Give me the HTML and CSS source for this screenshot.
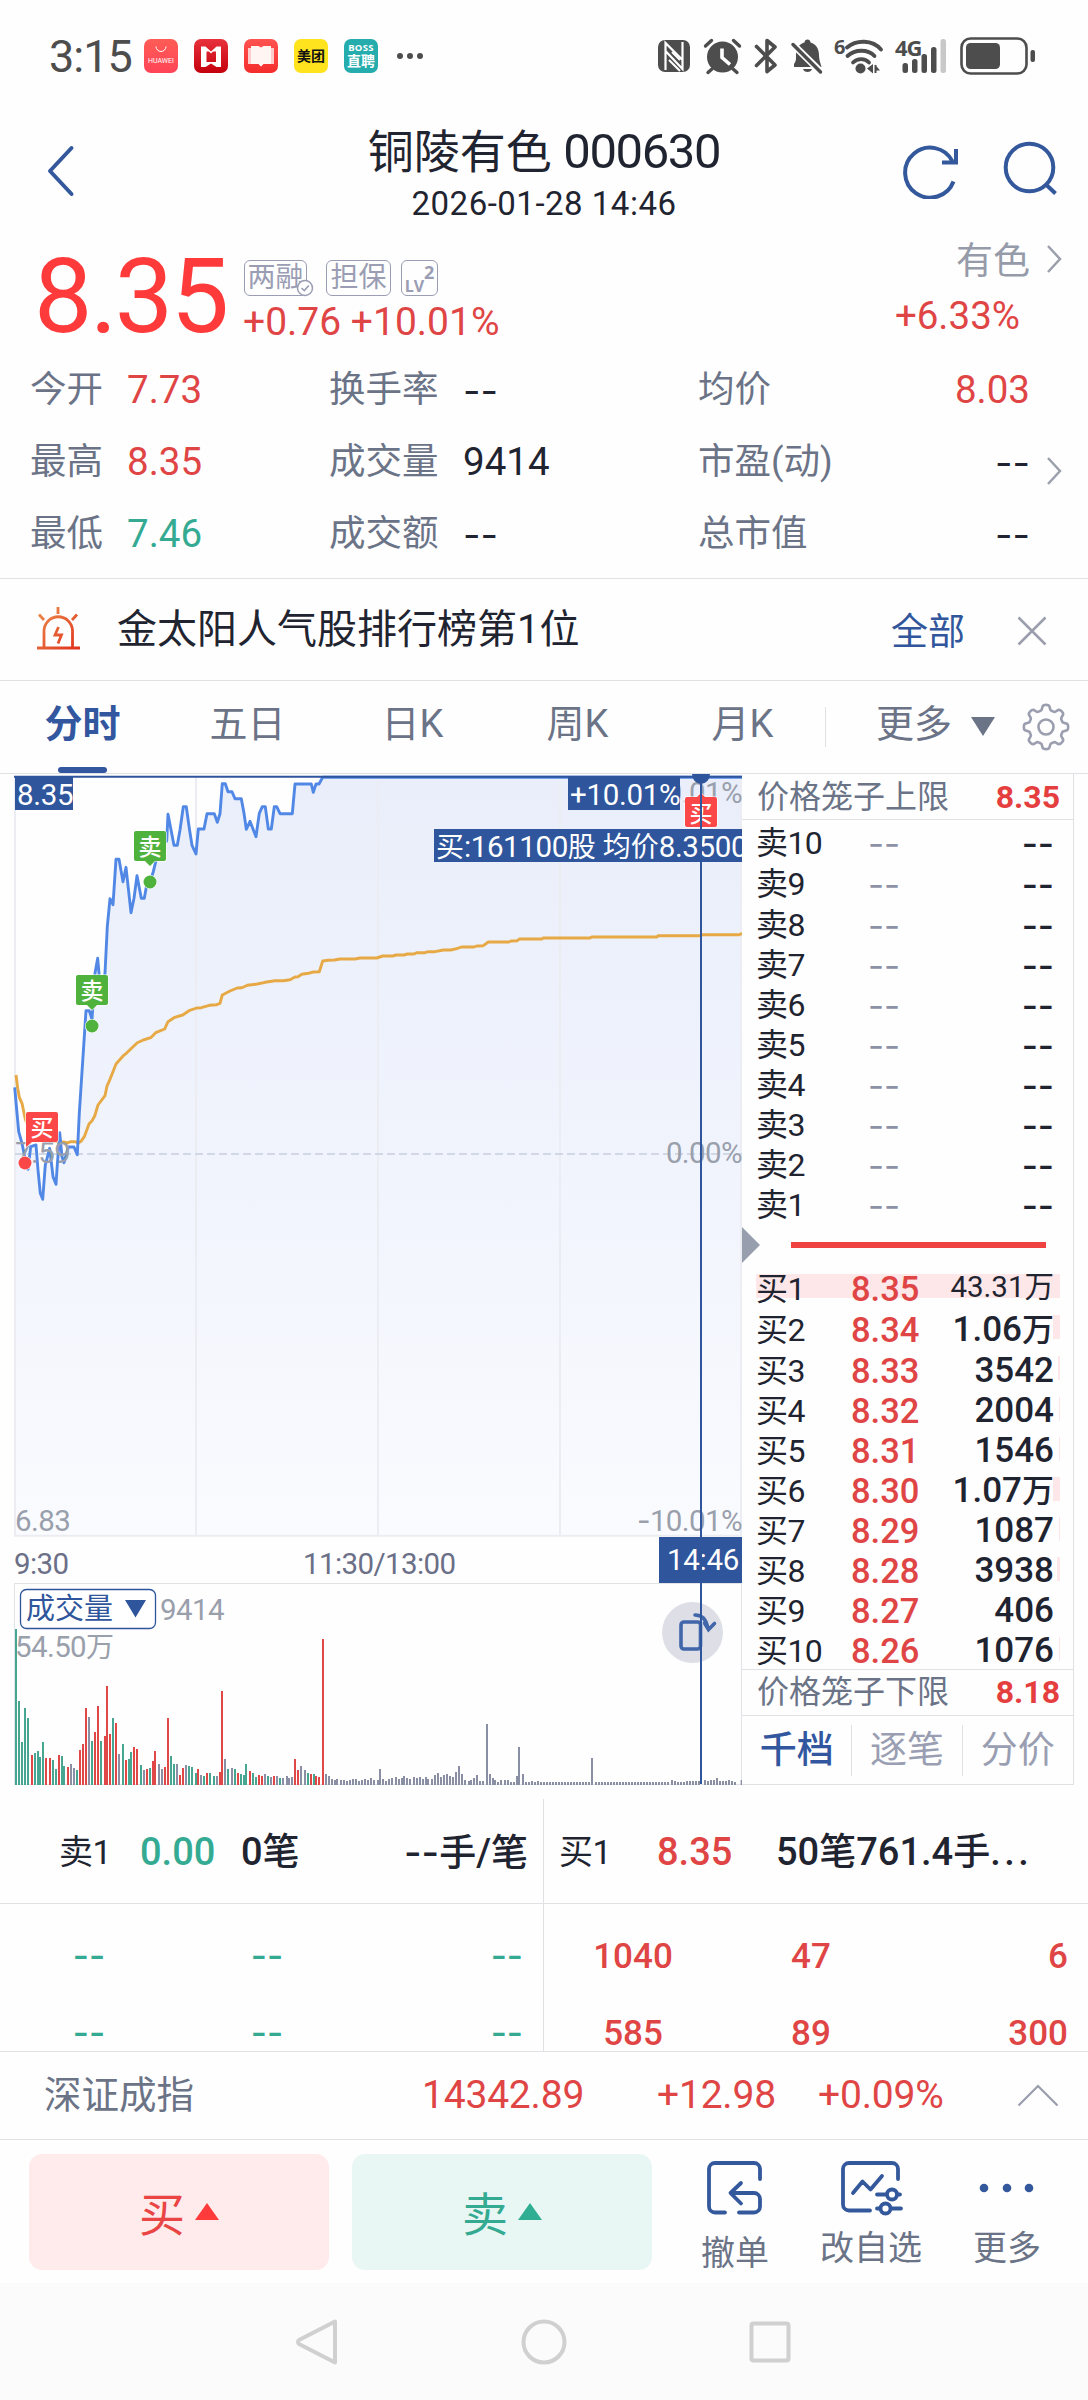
FILE: index.html
```html
<!DOCTYPE html>
<html lang="zh-CN">
<head>
<meta charset="utf-8">
<title>铜陵有色 000630</title>
<link rel="stylesheet" href="styles.css">
</head>
<body>
<div class="status">
  <span class="clock">3:15</span>
  <span class="app app-huawei"><svg width="12" height="7" viewBox="0 0 12 7"><path d="M1 0.5a5 5 0 0 0 10 0" fill="none" stroke="#fff" stroke-width="1"/></svg><b>HUAWEI</b></span>
  <span class="app app-book"><svg width="34" height="34" viewBox="0 0 34 34"><path d="M7 7.500h4.500l5.500 5 5.500-5H27V28h-4.500L17 24.500 11.500 28H7zM12.500 12.500v10.500h9.500v-10.500h-3l-2 2-2-2z" fill="#fff" fill-rule="evenodd"/></svg></span>
  <span class="app app-read"><svg width="34" height="34" viewBox="0 0 34 34"><path d="M4 9h26v16H19l-2 2-2-2H4z" fill="#fcc"/><path d="M7 7h7.500l2.500 1.500L19.500 7H27v18h-7.500L17 27.500 14.500 25H7z" fill="#fff5f3"/></svg></span>
  <span class="app app-meituan">美团</span>
  <span class="app app-boss"><b>BOSS</b><i>直聘</i></span>
  <svg class="more-dots" width="28" height="8" viewBox="0 0 28 8" fill="#4d4d4d"><circle cx="4" cy="4" r="3"/><circle cx="14" cy="4" r="3"/><circle cx="24" cy="4" r="3"/></svg>
  <svg class="sys" width="382" height="42" viewBox="655 35 382 42" fill="#4d4d4d">
    <rect x="657" y="40" width="32" height="32" rx="7"/>
    <path d="M664.500 70V43l17.500 17.500M681.500 42v27L664.500 51" fill="none" stroke="#fff" stroke-width="2.200"/><path d="M668 60l11 11M671 52l8 8" stroke="#fff" stroke-width="2" fill="none"/>
    <circle cx="721.500" cy="57" r="15.500"/><path d="M704.500 46l6-5.500M738.500 46l-6-5.500M711 69l-4 3.500M732 69l4 3.500" stroke="#4d4d4d" stroke-width="3.400" stroke-linecap="round"/><path d="M721 48.500v9l8 7" stroke="#fff" stroke-width="3.600" fill="none"/>
    <path d="M755.500 46.500L774 65l-8 6.500v-31l8 6.500-18.500 18.500" fill="none" stroke="#4d4d4d" stroke-width="3.600" stroke-linejoin="round" stroke-linecap="round"/>
    <path d="M793 67v-3c2.500-3 2-6 2-9 0-7 4-11.500 8.500-12.500 0-4 6-4 6 0C815 44 818 49 818 55c0 4 1 7 2.500 12z"/><path d="M802 69h9c-1 4-8 4-9 0z"/><path d="M791.500 44l29 28.500" stroke="#fff" stroke-width="7"/><path d="M792 44.500l27.500 27.500" stroke="#4d4d4d" stroke-width="3.500" stroke-linecap="round"/>
    <text x="833" y="54" class="sys-text sys-six">6</text>
    <g fill="none" stroke="#4d4d4d" stroke-width="3.800" stroke-linecap="round"><path d="M846 47.500c9.500-8 25.500-8 34 2"/><path d="M846.500 56c7.500-7 20.500-7 27 0"/><path d="M852 62.500c4.500-4.500 12-4.500 16 0"/></g>
    <circle cx="859.500" cy="68.500" r="5"/><path d="M866 68.500l6-4.500v9.500zM879 70.500h-5v-6zM873.500 65h2v8h-2z"/>
    <text x="894" y="56" class="sys-text">4G</text>
    <rect x="901.500" y="63" width="5.500" height="10" rx="2.500"/><rect x="911" y="59" width="5.500" height="14" rx="2.500"/><rect x="920.500" y="54" width="5.500" height="19" rx="2.500"/><rect x="930" y="47" width="5.500" height="26" rx="2.500"/><rect x="939.500" y="39" width="5.500" height="34" rx="2.500" fill="#c8c8c8"/>
    <rect x="960.500" y="38.500" width="65" height="35" rx="9" fill="none" stroke="#4d4d4d" stroke-width="2.600"/><rect x="965" y="43" width="34" height="26" rx="4.500"/><rect x="1029.500" y="50" width="4.500" height="12" rx="2"/>
  </svg>
</div>

<header class="header">
  <svg class="back" width="30" height="54" viewBox="0 0 30 54"><path d="M25.500 4L4 27l21.500 23" fill="none" stroke="#34589c" stroke-width="4" stroke-linecap="round" stroke-linejoin="round"/></svg>
  <div class="title"><h1>铜陵有色 <span>000630</span></h1><time>2026-01-28 14:46</time></div>
  <svg class="refresh" width="56" height="56" viewBox="0 0 56 56" fill="none" stroke="#34589c" stroke-width="4"><path d="M50.500 38.500A25 25 0 1 1 49.500 18.500"/><path d="M53 6v13.500H39"/></svg>
  <svg class="search" width="56" height="56" viewBox="0 0 56 56" fill="none" stroke="#34589c" stroke-width="4"><circle cx="27.500" cy="26.500" r="23.800"/><path d="M44.500 44l9 8.500"/></svg>
</header>

<section class="quote">
  <div class="quote-top">
    <strong class="price">8.35</strong>
    <div class="change">
      <div class="badges"><span class="badge badge-margin">两融<svg width="18" height="18" viewBox="0 0 18 18"><circle cx="9" cy="9" r="7.500" fill="#fff" stroke="#9a9db3" stroke-width="1.500"/><path d="M5.500 9l2.800 2.500 4.500-5" fill="none" stroke="#9a9db3" stroke-width="1.600"/></svg></span><span class="badge badge-guar">担保</span><span class="badge badge-lv">LV<sup>2</sup></span></div>
      <div class="red diff">+0.76 +10.01%</div>
    </div>
    <div class="sector"><span>有色</span><em class="red">+6.33%</em></div>
    <svg class="chev" width="16" height="30" viewBox="0 0 16 30"><path d="M2 2l12 13L2 28" fill="none" stroke="#9ca0ac" stroke-width="2.500"/></svg>
  </div>
  <div class="qrow"><span>今开</span><b class="red">7.73</b><span>换手率</span><b class="dash">--</b><span>均价</span><b class="red end">8.03</b></div>
  <div class="qrow"><span>最高</span><b class="red">8.35</b><span>成交量</span><b>9414</b><span>市盈(动)</span><b class="dash end">--</b><svg class="chev" width="16" height="30" viewBox="0 0 16 30"><path d="M2 2l12 13L2 28" fill="none" stroke="#9ca0ac" stroke-width="2.500"/></svg></div>
  <div class="qrow"><span>最低</span><b class="green">7.46</b><span>成交额</span><b class="dash">--</b><span>总市值</span><b class="dash end">--</b></div>
</section>

<section class="news">
  <svg width="46" height="46" viewBox="0 0 46 46" fill="none" stroke="url(#alarm)" stroke-width="2.800"><defs><linearGradient id="alarm" gradientUnits="userSpaceOnUse" x1="4" y1="4" x2="44" y2="44"><stop offset="0" stop-color="#ec8d4c"/><stop offset="1" stop-color="#e0301c"/></linearGradient></defs><path d="M2 43h43M9 43V26a14 14 0 0 1 28.500 0v17M23 2l.01 7M4 9.500l5 5.500M42 9.500l-5 5.500M23.500 22L20 30h6.500L23 38.500"/></svg>
  <p>金太阳人气股排行榜第1位</p>
  <a>全部</a>
  <svg class="close" width="30" height="30" viewBox="0 0 30 30"><path d="M1.500 1.500l27 27M28.500 1.500l-27 27" stroke="#9a9eac" stroke-width="2.500"/></svg>
</section>

<nav class="tabs">
  <span class="tab active">分时</span><span class="tab">五日</span><span class="tab">日K</span><span class="tab">周K</span><span class="tab">月K</span>
  <i class="sep"></i><span class="tab-more">更多</span>
  <svg class="tri" width="24" height="19" viewBox="0 0 24 19"><path d="M0 0h24L12 19z" fill="#6b7387"/></svg>
  <svg class="gear" width="48" height="48" viewBox="-24 -24 48 48" fill="none" stroke="#9a9eae" stroke-width="2.600"><circle r="7.500"/><path id="gear-outline"/></svg>
</nav>

<main class="main">
  <svg class="chart" width="742" height="1014" viewBox="0 773 742 1014">
    <defs><linearGradient id="fill" gradientUnits="userSpaceOnUse" x1="0" y1="777" x2="0" y2="1536"><stop offset="0" stop-color="#e9eefa"/><stop offset=".6" stop-color="#f2f5fd"/><stop offset="1" stop-color="#fafbfe"/></linearGradient></defs>
    <path id="area" fill="url(#fill)"/>
    <path class="grid" d="M15 777V1536M196 777V1536M378 777V1536M560 777V1536M741 777V1536M14 1535.700H742"/>
    <path class="prev" d="M15 1154H742"/>
    <path id="avg" class="avg-line"/>
    <path id="price" class="price-line"/>
    <g class="axis"><text x="15" y="1163">7.59</text><text x="15" y="1531">6.83</text><g text-anchor="end"><text x="742" y="803">+10.01%</text><text x="742" y="1163">0.00%</text><text x="742" y="1531"><tspan class="minus">-</tspan>10.01%</text></g></g>
    <g class="mark mark-sell"><path d="M136 831h28a2 2 0 0 1 2 2v26a2 2 0 0 1-2 2h-9l-5 5-5-5h-9a2 2 0 0 1-2-2v-26a2 2 0 0 1 2-2z"/><circle cx="150" cy="882" r="6.500"/><text x="150" y="855">卖</text></g>
    <g class="mark mark-sell"><path d="M78 975h28a2 2 0 0 1 2 2v26a2 2 0 0 1-2 2h-9l-5 5-5-5h-9a2 2 0 0 1-2-2v-26a2 2 0 0 1 2-2z"/><circle cx="92" cy="1026" r="6.500"/><text x="92" y="999">卖</text></g>
    <g class="mark mark-buy"><path d="M28 1112h28a2 2 0 0 1 2 2v26a2 2 0 0 1-2 2H32l-6 5v-33a2 2 0 0 1 2-2z"/><circle cx="25" cy="1163" r="6.500"/><text x="42" y="1136">买</text></g>
    <g class="mark mark-buy"><path d="M687 797h10l4-4 4 4h10a2 2 0 0 1 2 2v26a2 2 0 0 1-2 2h-28a2 2 0 0 1-2-2v-26a2 2 0 0 1 2-2z"/><text x="701" y="822">买</text></g>
    <path class="tag" d="M15 776h58v34H15zM568 776h112v34H568zM434 829h308v33H434zM659 1537h83v46h-83z"/>
    <path d="M14 776.700H742" stroke="#2f559c" stroke-width="2"/>
    <g class="tag-text"><text x="17" y="805">8.35</text><text x="570" y="805">+10.01%</text><text x="436" y="857" class="deal"><tspan class="han">买</tspan>:161100<tspan class="han">股</tspan> <tspan class="han">均价</tspan>8.3500</text><text x="667" y="1570">14:46</text></g>
    <g class="times"><text x="14" y="1574">9:30</text><text x="303" y="1574">11:30/13:00</text></g>
    <path d="M14.500 1785V1583.500H742M741.500 1584V1784.500H14" fill="none" stroke="#e1e3e7"/>
    <g class="axis"><text x="160" y="1620">9414</text><text x="15" y="1657">54.50<tspan class="han">万</tspan></text></g>
    <g transform="translate(0 1490) scale(.33333)" fill="none" stroke-width="6"><path id="bars-g" stroke="#46a692"/><path id="bars-r" stroke="#e04848"/><path id="bars-n" stroke="#8b8fa3"/></g>
    <rect x="20.500" y="1589.500" width="135" height="39" rx="6" fill="#fff" stroke="#2f559c" stroke-width="1.300"/><text x="26" y="1619" class="vol-name">成交量</text><path d="M125 1600h21l-10.500 17.500z" fill="#2f559c"/>
    <circle cx="692.500" cy="1632.500" r="30.500" fill="#dedfe6"/><path d="M684 1622h13.500a3 3 0 0 1 3 3v21a3 3 0 0 1-3 3H684a3 3 0 0 1-3-3v-21a3 3 0 0 1 3-3zM695 1615c6.500 0 11 4 12.500 12M704.500 1623l4 6.500 6-6" fill="none" stroke="#4166aa" stroke-width="3.600" stroke-linecap="round"/>
    <path d="M701 776V1784" stroke="#2f559c" stroke-width="2"/><path d="M692 774h18a9 10 0 0 1-18 0z" fill="#2f559c"/>
  </svg>
  <aside class="book">
    <div class="cage"><span>价格笼子上限</span><b>8.35</b></div>
    <div class="asks">
      <div class="lv"><span>卖10</span><i>--</i><b>--</b></div><div class="lv"><span>卖9</span><i>--</i><b>--</b></div><div class="lv"><span>卖8</span><i>--</i><b>--</b></div><div class="lv"><span>卖7</span><i>--</i><b>--</b></div><div class="lv"><span>卖6</span><i>--</i><b>--</b></div><div class="lv"><span>卖5</span><i>--</i><b>--</b></div><div class="lv"><span>卖4</span><i>--</i><b>--</b></div><div class="lv"><span>卖3</span><i>--</i><b>--</b></div><div class="lv"><span>卖2</span><i>--</i><b>--</b></div><div class="lv"><span>卖1</span><i>--</i><b>--</b></div>
    </div>
    <div class="ratio"><svg width="18" height="36" viewBox="0 0 18 36"><path d="M0 0l18 18L0 36z" fill="#979eae"/></svg><div class="ratio-bar"></div></div>
    <div class="bids">
      <div class="lv first" style="--depth:304px"><span>买1</span><i>8.35</i><b>43.31万</b></div>
      <div class="lv" style="--depth:7.500px"><span>买2</span><i>8.34</i><b>1.06<u>万</u></b></div>
      <div class="lv" style="--depth:2.500px"><span>买3</span><i>8.33</i><b>3542</b></div>
      <div class="lv" style="--depth:1.500px"><span>买4</span><i>8.32</i><b>2004</b></div>
      <div class="lv" style="--depth:1px"><span>买5</span><i>8.31</i><b>1546</b></div>
      <div class="lv" style="--depth:7.500px"><span>买6</span><i>8.30</i><b>1.07<u>万</u></b></div>
      <div class="lv" style="--depth:1px"><span>买7</span><i>8.29</i><b>1087</b></div>
      <div class="lv" style="--depth:3px"><span>买8</span><i>8.28</i><b>3938</b></div>
      <div class="lv" style="--depth:0px"><span>买9</span><i>8.27</i><b>406</b></div>
      <div class="lv" style="--depth:1px"><span>买10</span><i>8.26</i><b>1076</b></div>
    </div>
    <div class="cage cage-low"><span>价格笼子下限</span><b>8.18</b></div>
    <div class="book-tabs"><span class="on">千档</span><span>逐笔</span><span>分价</span></div>
  </aside>
</main>

<section class="queue">
  <div class="side">
    <div class="q-head sell"><span>卖1</span><b class="green">0.00</b><em>0<u>笔</u></em><em class="end"><s>--</s><u>手</u>/<u>笔</u></em></div>
    <div class="q-body green dashes"><div class="q-row"><span>--</span><span>--</span><span>--</span></div><div class="q-row"><span>--</span><span>--</span><span>--</span></div></div>
  </div>
  <div class="side">
    <div class="q-head buy"><span>买1</span><b class="red">8.35</b><em>50<u>笔</u>761.4<u>手</u><i class="dots">...</i></em></div>
    <div class="q-body red nums"><div class="q-row"><span>1040</span><span>47</span><span>6</span></div><div class="q-row"><span>585</span><span>89</span><span>300</span></div></div>
  </div>
</section>

<section class="index"><span>深证成指</span><b>14342.89</b><b>+12.98</b><b>+0.09%</b><svg width="42" height="23" viewBox="0 0 42 23"><path d="M1.500 21.500L21 2l19.500 19.500" fill="none" stroke="#9a9eac" stroke-width="2.200"/></svg></section>

<footer class="actions">
  <button class="btn btn-buy">买<svg width="24" height="17" viewBox="0 0 24 17"><path d="M12 0l12 17H0z" fill="#ff3a3a"/></svg></button>
  <button class="btn btn-sell">卖<svg width="24" height="17" viewBox="0 0 24 17"><path d="M12 0l12 17H0z" fill="#2fae94"/></svg></button>
  <div class="act act-cancel"><svg width="60" height="56" viewBox="0 0 60 56"><path d="M20 52.500H10a6 6 0 0 1-6-6V9a6 6 0 0 1 6-6h39a6 6 0 0 1 6 6v10M34 52.500h15a6 6 0 0 0 6-6V39a6 6 0 0 0-6-6H26M36 23L25.500 33 36 43.500"/></svg><span>撤单</span></div>
  <div class="act act-edit"><svg width="64" height="56" viewBox="0 0 64 56"><path d="M31 50.500H10a6 6 0 0 1-6-6V9a6 6 0 0 1 6-6h43a6 6 0 0 1 6 6v10M14 33l9.500-11.500 8 8L43 16M38 34.500h8M61 34.500h-2M38 48.500h2M52 48.500h10"/><circle cx="53" cy="34.500" r="5"/><circle cx="46.500" cy="48.500" r="5"/></svg><span>改自选</span></div>
  <div class="act act-more"><svg width="60" height="56" viewBox="0 0 60 56"><g fill="#34589c" stroke="none"><circle cx="7" cy="28" r="4.300"/><circle cx="30" cy="28" r="4.300"/><circle cx="52" cy="28" r="4.300"/></g></svg><span>更多</span></div>
</footer>

<div class="softkeys">
  <svg width="48" height="48" viewBox="0 0 48 48"><path d="M41 3.500v41L5 26a2.500 2.500 0 0 1 0-4z"/></svg>
  <svg width="48" height="48" viewBox="0 0 48 48"><circle cx="24" cy="24" r="20.500"/></svg>
  <svg width="48" height="48" viewBox="0 0 48 48"><rect x="5.500" y="5.500" width="37" height="37" rx="2"/></svg>
</div>
<script src="chart.js"></script>
</body>
</html>
```
FILE: styles.css
```css
* { box-sizing: border-box; margin: 0; padding: 0; }
body { width: 1088px; height: 2400px; overflow: hidden; background: #fefefe; color: #1f2430; font-family: Roboto, "Noto Sans CJK SC", sans-serif; }
svg { display: block; flex: none; }
b, i, em, u, s { font-weight: inherit; font-style: normal; text-decoration: none; }
.red { color: #e04545; }
.green { color: #35aa92; }
.end { text-align: right; }

.status { display: flex; align-items: center; height: 112px; padding-left: 49px; }
.clock { width: 95px; font-size: 45px; color: #4d4d4d; letter-spacing: -1px; }
.app { display: flex; flex-direction: column; align-items: center; justify-content: center; width: 34px; height: 34px; margin-right: 16px; border-radius: 7px; color: #fff; overflow: hidden; }
.app-huawei { background: linear-gradient(#ff5c55, #ff4457); gap: 4px; }
.app-huawei b { font-size: 7px; line-height: 9px; }
.app-book { background: linear-gradient(#e8323c, #c4000c); }
.app-read { background: linear-gradient(#ff5350, #f42c2c); }
.app-meituan { background: #ffe31f; color: #111; font-size: 14px; font-weight: 700; line-height: 30px; }
.app-boss { background: #25acac; }
.app-boss b { font: 700 9.500px/11px "Open Sans", sans-serif; letter-spacing: .3px; }
.app-boss i { font-size: 14px; line-height: 17px; font-weight: 700; }
.more-dots { margin-left: 2px; }
.sys { margin-left: 232px; overflow: visible; }
.sys-text { font: 700 22px "Open Sans", sans-serif; letter-spacing: -1px; }
.sys-six { font-size: 20px; }

.header { display: flex; align-items: center; height: 118px; position: relative; }
.back { margin-left: 46px; }
.title { width: 400px; margin-left: 268px; text-align: center; align-self: flex-start; padding-top: 14px; }
.title h1 { font-size: 46px; font-weight: 400; line-height: 52px; white-space: nowrap; }
.title h1 span { font-size: 49px; letter-spacing: -1.400px; }
.title time { display: block; margin-top: 6px; font-size: 33px; line-height: 40px; letter-spacing: .5px; }
.refresh { margin-left: 159px; }
.search { margin: -4px 0 0 43px; }

.quote { height: 349px; border-bottom: 1px solid #dfe1e4; }
.quote-top { display: flex; height: 124px; }
.price { width: 208px; margin: 17px 0 0 34px; font-size: 104px; font-weight: 400; line-height: 100px; letter-spacing: -2.500px; color: #ff3a3a; }
.change { width: 500px; padding-top: 30px; margin-left: 1px; }
.badges { display: flex; height: 36px; padding-left: 1px; }
.badge { position: relative; height: 36px; border: 1.500px solid #9a9db3; border-radius: 6px; color: #9a9db3; font-size: 28px; line-height: 33px; text-align: center; }
.badge-margin { width: 63px; margin-right: 19px; }
.badge-margin svg { position: absolute; right: -8px; bottom: -2px; }
.badge-guar { width: 65px; margin-right: 10px; }
.badge-lv { width: 37px; font: 700 16px/50px "Open Sans", sans-serif; }
.badge-lv sup { font-size: 18px; line-height: 0; vertical-align: 13px; }
.diff { margin-top: 4px; font-size: 39px; line-height: 44px; }
.sector { width: 287px; padding-top: 12px; text-align: right; font-size: 37px; line-height: 40px; color: #969ba9; }
.sector span { display: block; }
.sector em { display: block; margin: 14px 10px 0 0; font-size: 38.500px; line-height: 40px; }
.quote-top .chev { margin: 14px 0 0 16px; }
.qrow { display: grid; grid-template-columns: 97px 202px 134px 235px 200px 132px 58px; align-items: center; height: 72px; padding-left: 30px; font-size: 36.500px; line-height: 72px; color: #6b7387; }
.qrow b { font-size: 38.500px; color: #1f2430; letter-spacing: 0; }
.qrow b.red { color: #e04545; }
.qrow b.green { color: #35aa92; }
.qrow b.dash { font-family: Inter, sans-serif; font-size: 38px; }
.qrow .chev { margin: 17px 0 0 16px; }

.news { display: flex; align-items: center; height: 102px; padding-left: 35px; border-bottom: 1px solid #dfe1e4; }
.news p { width: 774px; padding: 1px 0 0 36px; font-size: 40px; line-height: 60px; }
.news a { width: 125px; padding-left: 36px; margin-top: -1px; font-size: 37px; color: #32569b; }
.news svg { margin-top: -4px; }
.news .close { margin: 2px 0 0 37px; }

.tabs { display: flex; height: 93px; border-bottom: 1px solid #dfe1e4; font-size: 38px; line-height: 87px; color: #6b7387; }
.tab { width: 165px; text-align: center; }
.tab.active { position: relative; color: #33579f; font-weight: 700; }
.tab.active::after { content: ""; position: absolute; left: 58px; bottom: 0; width: 49px; height: 6px; border-radius: 3px; background: #33579f; }
.sep { width: 1px; height: 40px; margin-top: 26px; background: #dfe1e4; }
.tab-more { width: 95px; margin-left: 50px; }
.tri { margin-top: 36px; }
.gear { margin: 22px 0 0 27px; }

.main { display: flex; height: 1011px; }
.chart { margin-top: -1px; }
.grid { fill: none; stroke: #ebedf2; stroke-width: 2; }
.prev { fill: none; stroke: #d0d8e6; stroke-width: 2; stroke-dasharray: 8 4; }
.avg-line, .price-line { fill: none; stroke-width: 2.900; stroke-linejoin: round; }
.avg-line { stroke: #e7a945; }
.price-line { stroke: #5188e6; }
.axis, .times, .tag-text { font-size: 29.500px; letter-spacing: -.6px; }
.axis { fill: #9a9fac; }
.times { fill: #6b6f87; }
.tag { fill: #2f559c; }
.tag-text { fill: #fff; letter-spacing: -.3px; }
.deal { letter-spacing: -.4px; }
.han { font-size: 28px; letter-spacing: 0; }
.minus { font-family: Inter, sans-serif; }
.mark path, .mark circle { stroke: #fff; stroke-width: 1.200; paint-order: stroke; }
.mark-sell { fill: #4fb23c; }
.mark-buy { fill: #fb4747; }
.mark text { fill: #fff; font-size: 23px; font-weight: 500; text-anchor: middle; }
.vol-name { fill: #2f559c; font-size: 29px; }

.book { width: 332px; height: 1011px; border-right: 1px solid #dfe1e4; border-bottom: 1px solid #dfe1e4; font-size: 32px; }
.cage { display: flex; justify-content: space-between; height: 46px; padding: 0 13px 0 15px; border-bottom: 1px solid #dfe1e4; line-height: 46px; color: #6b7387; }
.cage b { font-weight: 700; color: #e53e3e; }
.cage-low { height: 47px; margin-top: -2px; border-top: 1px solid #dfe1e4; line-height: 45px; }
.asks { padding-top: 2px; }
.lv { display: grid; grid-template-columns: 95px 1fr 100px; height: 40px; margin: 0 13px 0 14px; line-height: 40px; align-items: center; }
.lv span { font-size: 32px; letter-spacing: -.6px; }
.lv b { padding-right: 6px; text-align: right; }
.asks .lv:nth-child(-n+3) { height: 41px; }
.asks i, .asks b { font-family: Inter, sans-serif; font-size: 35px; }
.asks i { padding-left: 17px; color: #8d91a5; }
.asks b { font-weight: 500; }
.ratio { display: flex; align-items: center; height: 39px; }
.ratio-bar { width: 255px; height: 6px; margin-left: 31px; background: #ee4340; }
.bids { padding-top: 4px; }
.bids .lv { background: linear-gradient(#fde7e8, #fde7e8) right 6px / var(--depth) 24px no-repeat; }
.bids .lv:nth-child(-n+3) { height: 41px; }
.bids i { color: #e04545; font-size: 34.500px; font-weight: 500; }
.bids b { font-size: 35px; font-weight: 500; margin-left: -30px; }
.bids u { font-size: 32px; }
.bids .first b { font-size: 29.500px; font-weight: 400; margin-top: -4px; }
.book-tabs { display: flex; height: 68px; padding-top: 9px; font-size: 37px; color: #9a9eb2; }
.book-tabs span { width: 111px; height: 51px; line-height: 51px; text-align: center; border-right: 1px solid #dfe1e4; }
.book-tabs span:last-child { border: 0; }
.book-tabs .on { color: #33579f; font-weight: 500; }

.queue { display: flex; height: 267px; padding-top: 14px; border-bottom: 1px solid #dfe1e4; overflow: hidden; }
.side { width: 544px; }
.side:first-child { border-right: 1px solid #dfe1e4; }
.q-head { display: grid; height: 105px; border-bottom: 1px solid #dfe1e4; line-height: 106px; font-size: 38px; white-space: nowrap; }
.q-head span { font-size: 34px; letter-spacing: -.5px; }
.q-head b, .q-head em { font-weight: 500; }
.q-head u { font-size: 37px; }
.q-head s { font-family: Inter, sans-serif; font-size: 38px; }
.q-head .dots { letter-spacing: 3.500px; }
.sell { grid-template-columns: 81px 101px 120px 1fr; padding: 0 15px 0 59px; }
.buy { grid-template-columns: 98px 119px 1fr; padding-left: 15px; }
.q-body { padding-top: 14px; font-size: 35px; font-weight: 500; line-height: 77px; }
.q-row { display: grid; grid-template-columns: 178px 178px 1fr; text-align: center; height: 77px; }
.q-row span:last-child { text-align: right; }
.dashes { padding-right: 20px; font-family: Inter, sans-serif; line-height: 75px; }
.nums { padding-right: 20px; }

.index { display: flex; align-items: center; height: 88px; padding-left: 44px; border-bottom: 1px solid #dfe1e4; font-size: 37.500px; line-height: 87px; color: #6b7387; }
.index span { width: 378px; }
.index b { width: 235px; font-size: 39px; letter-spacing: -.2px; color: #e04545; }
.index b:nth-of-type(2) { width: 161px; }
.index b:nth-of-type(3) { width: 199px; }

.actions { display: flex; height: 143px; padding: 14px 0 0 29px; }
.btn { display: flex; align-items: center; justify-content: center; gap: 10px; width: 300px; height: 116px; padding-bottom: 3px; border: 0; border-radius: 13px; font: 400 46px Roboto, "Noto Sans CJK SC", sans-serif; }
.btn svg { margin-top: 2px; }
.btn-buy { margin-right: 23px; background: #ffebeb; color: #e94545; }
.btn-sell { background: #e9f7f4; color: #35aa92; }
.act { display: flex; flex-direction: column; align-items: center; width: 110px; padding-top: 6px; font-size: 34px; line-height: 40px; color: #6b7387; white-space: nowrap; }
.act svg { fill: none; stroke: #34589c; stroke-width: 3.800; stroke-linecap: round; stroke-linejoin: round; }
.act span { margin-top: 12px; }
.act-cancel { margin-left: 28px; }
.act-cancel span { margin-top: 17px; }
.act-edit { margin-left: 26px; }
.act-more { margin-left: 26px; }

.softkeys { display: flex; align-items: center; justify-content: space-between; height: 117px; padding: 0 294px; background: #fbfbfb; }
.softkeys svg { fill: none; stroke: #d0d0d0; stroke-width: 4; stroke-linejoin: round; }
```
FILE: chart.js
```js
// Samples are stored at three units per pixel; the chart starts 760px down the page.
const price = "44,982 50,1050 56,1115 66,1150 72,1180 84,1228 92,1160 108,1155 114,1230 121,1300 128,1318 136,1215 149,1165 159,1250 168,1273 172,1215 179,1118 186,1190 192,1208 205,1161 222,1161 232,1184 238,1060 258,752 268,752 276,778 285,640 293,595 302,700 315,640 322,500 330,416 339,434 348,298 357,298 369,365 378,322 393,458 402,415 411,347 424,415 433,415 440,375 450,366 460,335 466,310 478,260 500,243 504,163 522,256 532,256 540,210 550,140 559,140 568,205 576,256 588,282 595,207 612,207 621,161 643,161 652,187 660,161 667,71 676,71 684,95 696,95 705,116 724,116 732,160 739,208 750,184 768,230 778,160 787,140 796,140 805,207 814,207 823,140 830,140 840,161 877,161 885,72 934,72 940,97 948,72 957,72 968,52 2226,52";
const avg = "48,945 53,985 58,1012 66,1030 76,1078 100,1130 170,1145 190,1146 203,1149 210,1145 225,1145 235,1149 243,1144 253,1130 267,1092 276,1082 284,1068 294,1035 315,1007 321,978 330,958 348,912 370,887 379,880 412,848 430,840 452,833 467,818 494,807 504,785 522,773 548,765 567,752 590,744 604,743 628,736 650,734 660,730 667,705 690,693 712,684 726,683 742,676 772,672 795,667 825,662 850,662 870,659 885,651 894,650 905,643 925,640 940,636 958,635 968,603 985,601 1003,600 1020,597 1065,597 1080,594 1130,594 1148,588 1178,588 1188,585 1212,585 1222,582 1242,582 1250,578 1275,578 1285,575 1305,575 1330,570 1352,570 1370,566 1385,561 1422,561 1430,558 1450,557 1465,546 1527,546 1533,543 1552,542 1558,537 1625,537 1630,534 1770,534 1775,531 1970,531 1975,527 2100,527 2110,524 2218,524 2226,520";
const toPath = s => "M" + s.split(" ").map(p => {
  const [x, y] = p.split(",").map(Number);
  return (x / 3).toFixed(1) + " " + (760 + y / 3).toFixed(1);
}).join("L");
const set = (id, d) => document.getElementById(id).setAttribute("d", d);
set("price", toPath(price));
set("avg", toPath(avg));
set("area", toPath(price) + "V1536H15Z");

// g: down, r: up, n: flat
const bars = "g48,417 g57,633 g66,756 g75,654 g84,684 r96,795 g105,789 g114,783 g120,801 g129,756 r138,804 r150,804 g159,810 g168,837 r177,795 g186,798 g192,828 r204,831 n213,822 n222,834 g231,840 r240,780 r249,762 r258,654 n267,681 g276,753 r285,726 r294,648 g303,753 r315,738 r321,588 r330,732 g339,684 r348,699 n357,792 g369,762 r378,810 g387,807 g393,786 r402,771 r411,777 g423,825 n432,840 r441,837 g450,834 r459,813 r465,783 n477,822 n486,837 r495,831 r504,684 g513,798 g522,822 n531,822 r540,855 r549,834 n558,825 g567,828 g576,831 g588,849 r594,837 n603,855 g612,858 r621,849 g630,849 g642,858 n651,858 r660,846 r666,603 n675,807 g684,837 n696,834 g705,837 r714,849 g723,852 g732,855 g738,822 r750,843 g759,849 g768,861 r777,855 r786,858 n795,852 g804,858 n813,861 r822,858 n831,858 g840,864 n849,864 n861,858 n867,864 n876,861 r885,807 r894,840 n903,828 n915,840 g924,849 r933,852 g942,852 r948,858 r957,861 r969,447 n978,852 n987,858 n996,867 n1005,870 n1011,867 n1023,870 n1032,870 n1041,873 n1050,870 n1059,867 n1068,867 n1077,873 n1086,870 n1095,867 n1104,870 n1113,864 n1122,870 n1134,870 n1140,837 n1149,867 n1158,873 n1167,867 n1176,864 n1188,861 n1197,867 n1206,864 n1212,858 n1221,864 n1230,867 n1242,861 n1251,864 n1260,861 n1269,867 n1278,861 n1284,867 n1296,867 n1305,855 n1314,849 n1323,861 n1332,855 n1341,852 n1350,858 n1359,861 n1368,846 n1377,828 n1386,852 n1395,870 n1407,873 n1413,870 n1422,864 n1431,855 n1440,873 n1449,873 n1461,702 n1470,852 n1479,864 n1485,870 n1494,876 n1503,870 n1515,870 n1524,870 n1533,876 n1542,876 n1551,858 n1557,771 n1569,852 n1578,876 n1587,876 n1596,873 n1605,876 n1614,873 n1776,804 n2016,870 n2025,873 n2115,870 n2124,873 n2133,870 n2142,870 n2151,864 n2160,873 n2169,873 n2178,873 n2187,870 n2196,873 n2205,876 n2225,870".split(" ");
for (let x = 1623; x < 1770; x += 9) bars.push(`n${x},876`);
for (let x = 1788; x < 2012; x += 9) bars.push(`n${x},876`);
for (let x = 2034; x < 2055; x += 9) bars.push(`n${x},876`);
for (let x = 2061; x < 2100; x += 9) bars.push(`n${x},873`);
const paths = { g: "", r: "", n: "" };
for (const bar of bars) {
  const [x, top] = bar.slice(1).split(",");
  paths[bar[0]] += `M${x} 885V${top}`;
}
for (const k in paths) set("bars-" + k, paths[k]);

// Eight-toothed gear outline
let gear = "";
for (let a = 0; a <= 360; a += 3) {
  const wave = Math.tanh(2.2 * Math.cos(a * 8 * Math.PI / 180));
  const r = 19.6 + 2.6 * wave;
  const t = (a - 90) * Math.PI / 180;
  gear += (gear ? "L" : "M") + (r * Math.cos(t)).toFixed(2) + " " + (r * Math.sin(t)).toFixed(2);
}
set("gear-outline", gear + "Z");
```
